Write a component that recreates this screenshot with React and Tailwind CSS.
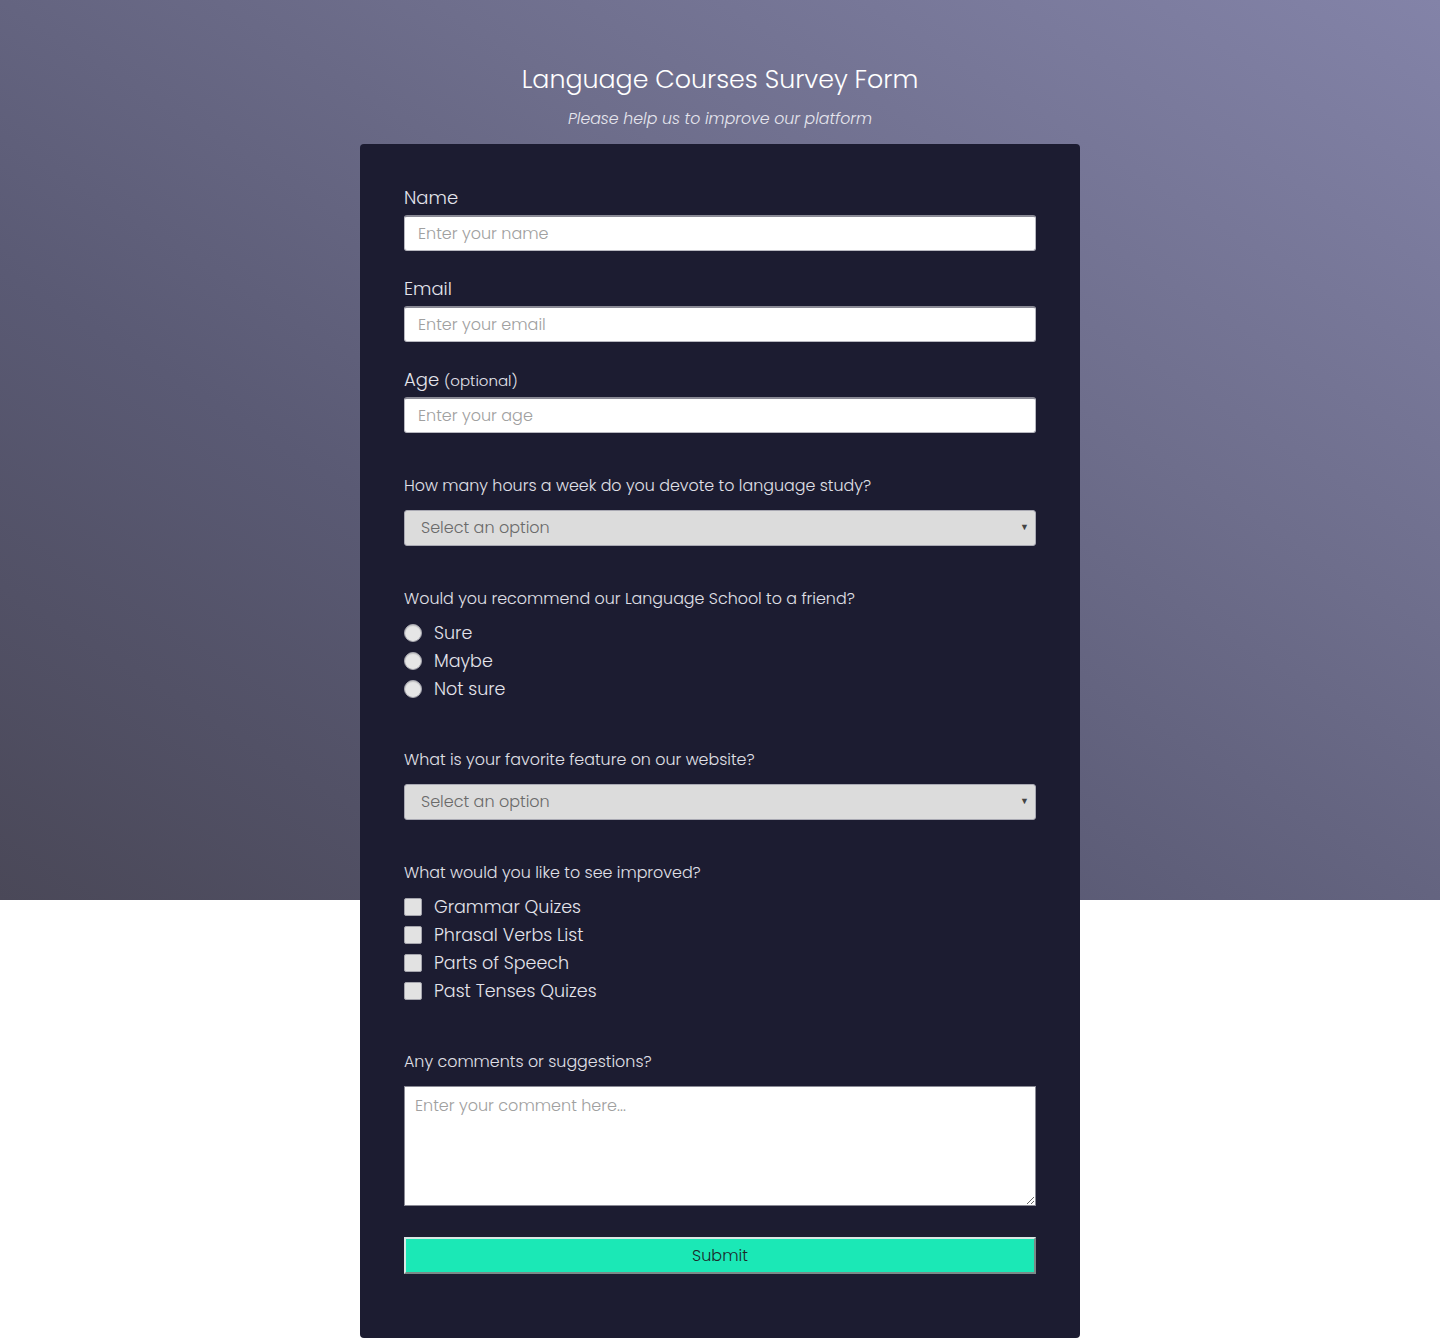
import React from "react";

const font = "font-['Poppins','Open_Sans',sans-serif]";

function Label({ children, className = "" }) {
  return <label className={`block h-[27px] text-[18px] font-light text-[#e4e4ec] leading-[27px] ${className}`}>{children}</label>;
}

function Question({ children }) {
  return <p className="text-[15.9px] font-light text-[#e0e0e8] leading-[24px]">{children}</p>;
}

function TextInput({ placeholder }) {
  return (
    <input
      type="text"
      placeholder={placeholder}
      className="block w-full h-[36px] rounded-[3px] bg-white border border-[#b8b8c0] border-t-[2px] border-t-[#8a8a95] px-[13px] text-[16px] font-light text-[#333] placeholder:text-[#a0a0a0] outline-none"
    />
  );
}

function Select() {
  return (
    <div className="flex items-center justify-between w-full h-[36px] rounded-[3px] bg-[#dcdcdc] border border-[#a9a9b3] px-[16px] pr-[6px]">
      <span className="text-[16px] font-light text-[#6a6a6a]">Select an option</span>
      <span className="text-[9px] text-[#444]">▼</span>
    </div>
  );
}

function Radio({ label }) {
  return (
    <div className="flex items-center h-[28px]">
      <span className="w-[18px] h-[18px] rounded-full bg-[#e6e6e6] border border-[#a5a5ad] shadow-[inset_0_1px_1px_rgba(0,0,0,0.15)]" />
      <span className="ml-[12px] text-[17.5px] font-light text-[#e4e4ec]">{label}</span>
    </div>
  );
}

function Check({ label }) {
  return (
    <div className="flex items-center h-[28px]">
      <span className="w-[18px] h-[18px] rounded-[2px] bg-[#e2e2e2] border border-[#a5a5ad]" />
      <span className="ml-[12px] text-[17.5px] font-light text-[#e4e4ec]">{label}</span>
    </div>
  );
}

export default function App() {
  return (
    <div className={`${font} min-h-[1338px] bg-white bg-[linear-gradient(to_top_right,#4a4858,#5a5a74_35%,#6e6e8c_65%,#8383a8)] bg-no-repeat bg-[length:100%_900px]`}>
      <header className="pt-[60px] text-center">
        <h1 className="text-[25.3px] font-light text-white leading-[39px]">Language Courses Survey Form</h1>
        <p className="mt-[8px] text-[15.75px] font-light italic text-[#e6e6ee] leading-[24px]">Please help us to improve our platform</p>
      </header>
      <main className="mx-auto mt-[13px] w-[720px] rounded-[4px] bg-[#1c1c31] px-[44px] pt-[40px] pb-[64px]">
        <div>
          <Label>Name</Label>
          <div className="mt-[4px]"><TextInput placeholder="Enter your name" /></div>
        </div>
        <div className="mt-[24px]">
          <Label>Email</Label>
          <div className="mt-[4px]"><TextInput placeholder="Enter your email" /></div>
        </div>
        <div className="mt-[24px]">
          <Label>Age <span className="text-[15px] leading-none">(optional)</span></Label>
          <div className="mt-[4px]"><TextInput placeholder="Enter your age" /></div>
        </div>
        <div className="mt-[41px]">
          <Question>How many hours a week do you devote to language study?</Question>
          <div className="mt-[12px]"><Select /></div>
        </div>
        <div className="mt-[41px]">
          <Question>Would you recommend our Language School to a friend?</Question>
          <div className="mt-[8px]">
            <Radio label="Sure" />
            <Radio label="Maybe" />
            <Radio label="Not sure" />
          </div>
        </div>
        <div className="mt-[45px]">
          <Question>What is your favorite feature on our website?</Question>
          <div className="mt-[12px]"><Select /></div>
        </div>
        <div className="mt-[41px]">
          <Question>What would you like to see improved?</Question>
          <div className="mt-[8px]">
            <Check label="Grammar Quizes" />
            <Check label="Phrasal Verbs List" />
            <Check label="Parts of Speech" />
            <Check label="Past Tenses Quizes" />
          </div>
        </div>
        <div className="mt-[45px]">
          <Question>Any comments or suggestions?</Question>
          <textarea
            placeholder="Enter your comment here..."
            className="mt-[12px] block w-full h-[120px] bg-white border border-[#8a8a95] px-[10px] py-[7px] text-[16px] font-light text-[#333] placeholder:text-[#a0a0a0] outline-none"
          />
        </div>
        <button className="mt-[31px] block w-full h-[37px] bg-[#1be8b6] border-2 border-t-[#d8e8e4] border-l-[#d8e8e4] border-r-[#7a8a88] border-b-[#7a8a88] text-[16px] font-light text-[#1c2a2a]">
          Submit
        </button>
      </main>
    </div>
  );
}
